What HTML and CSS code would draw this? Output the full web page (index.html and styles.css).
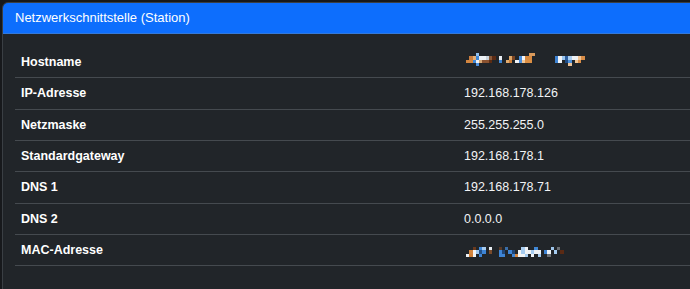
FILE: index.html
```html
<!DOCTYPE html>
<html lang="de">
<head>
<meta charset="utf-8">
<title>Netzwerkschnittstelle (Station)</title>
<link rel="stylesheet" href="styles.css">
</head>
<body>
<div class="card">
  <div class="card-header">Netzwerkschnittstelle (Station)</div>
  <div class="card-body">
    <table class="info">
      <tr><th>Hostname</th><td><svg class="mosaic host" viewBox="0 0 37 5" shape-rendering="crispEdges" aria-hidden="true">
        <rect x="3" y="0" width="1" height="1" fill="#8fc0ef"/>
        <rect x="19" y="0" width="2" height="1" fill="#d89a5c"/>
        <rect x="1" y="1" width="1" height="1" fill="#c97d3e"/>
        <rect x="2" y="1" width="1" height="1" fill="#e2b07a"/>
        <rect x="3" y="1" width="1" height="1" fill="#3d86d6"/>
        <rect x="4" y="1" width="2" height="1" fill="#eef2f6"/>
        <rect x="6" y="1" width="1" height="1" fill="#c9d3dc"/>
        <rect x="7" y="1" width="1" height="1" fill="#8a5a3a"/>
        <rect x="8" y="1" width="1" height="1" fill="#5a2a14"/>
        <rect x="10" y="1" width="1" height="1" fill="#e8eef4"/>
        <rect x="13" y="1" width="1" height="1" fill="#e0a868"/>
        <rect x="14" y="1" width="1" height="1" fill="#7a4422"/>
        <rect x="16" y="1" width="1" height="1" fill="#4b8fdc"/>
        <rect x="17" y="1" width="1" height="1" fill="#f4f6f8"/>
        <rect x="18" y="1" width="2" height="1" fill="#d7893f"/>
        <rect x="27" y="1" width="1" height="1" fill="#3e82d2"/>
        <rect x="28" y="1" width="1" height="1" fill="#f2f4f6"/>
        <rect x="29" y="1" width="1" height="1" fill="#9cc6ee"/>
        <rect x="30" y="1" width="1" height="1" fill="#2c5e9e"/>
        <rect x="31" y="1" width="1" height="1" fill="#a9cdf0"/>
        <rect x="32" y="1" width="2" height="1" fill="#eef1f4"/>
        <rect x="34" y="1" width="1" height="1" fill="#f0c494"/>
        <rect x="35" y="1" width="1" height="1" fill="#d88d48"/>
        <rect x="0" y="2" width="2" height="1" fill="#d38640"/>
        <rect x="2" y="2" width="1" height="1" fill="#3f88d8"/>
        <rect x="3" y="2" width="1" height="1" fill="#eef2f6"/>
        <rect x="4" y="2" width="1" height="1" fill="#d8ab78"/>
        <rect x="5" y="2" width="2" height="1" fill="#8a5230"/>
        <rect x="7" y="2" width="1" height="1" fill="#5c2c12"/>
        <rect x="10" y="2" width="1" height="1" fill="#3e86d6"/>
        <rect x="12" y="2" width="1" height="1" fill="#e2ad70"/>
        <rect x="13" y="2" width="1" height="1" fill="#cf7f38"/>
        <rect x="15" y="2" width="1" height="1" fill="#f0f3f6"/>
        <rect x="16" y="2" width="1" height="1" fill="#4a8ddb"/>
        <rect x="17" y="2" width="1" height="1" fill="#f1c89a"/>
        <rect x="18" y="2" width="2" height="1" fill="#dc8f44"/>
        <rect x="27" y="2" width="1" height="1" fill="#3f85d4"/>
        <rect x="28" y="2" width="1" height="1" fill="#f0f3f6"/>
        <rect x="30" y="2" width="1" height="1" fill="#1f4d86"/>
        <rect x="31" y="2" width="1" height="1" fill="#4d90da"/>
        <rect x="33" y="2" width="1" height="1" fill="#f2c898"/>
        <rect x="34" y="2" width="1" height="1" fill="#db8e46"/>
        <rect x="3" y="3" width="1" height="1" fill="#4a8ddb"/>
        <rect x="31" y="3" width="1" height="1" fill="#eec59a"/>
      </svg></td></tr>
      <tr><th>IP-Adresse</th><td>192.168.178.126</td></tr>
      <tr><th>Netzmaske</th><td>255.255.255.0</td></tr>
      <tr><th>Standardgateway</th><td>192.168.178.1</td></tr>
      <tr><th>DNS 1</th><td>192.168.178.71</td></tr>
      <tr><th>DNS 2</th><td>0.0.0.0</td></tr>
      <tr><th>MAC-Adresse</th><td><svg class="mosaic mac" viewBox="0 0 31 3" shape-rendering="crispEdges" aria-hidden="true">
        <rect x="2" y="0" width="1" height="1" fill="#6a3a1e"/>
        <rect x="4" y="0" width="1" height="1" fill="#3f86d6"/>
        <rect x="5" y="0" width="1" height="1" fill="#a6ccf0"/>
        <rect x="7" y="0" width="1" height="1" fill="#e8ecf0"/>
        <rect x="10" y="0" width="1" height="1" fill="#5a3a26"/>
        <rect x="12" y="0" width="1" height="1" fill="#3a6ea8"/>
        <rect x="17" y="0" width="1" height="1" fill="#a8cdf0"/>
        <rect x="18" y="0" width="1" height="1" fill="#f0f3f6"/>
        <rect x="21" y="0" width="1" height="1" fill="#4188d6"/>
        <rect x="26" y="0" width="1" height="1" fill="#9dc4ea"/>
        <rect x="28" y="0" width="1" height="1" fill="#6b6f74"/>
        <rect x="1" y="1" width="1" height="1" fill="#d38640"/>
        <rect x="2" y="1" width="1" height="1" fill="#f2f4f6"/>
        <rect x="3" y="1" width="1" height="1" fill="#9fc8ef"/>
        <rect x="4" y="1" width="1" height="1" fill="#234f86"/>
        <rect x="5" y="1" width="1" height="1" fill="#3e84d4"/>
        <rect x="7" y="1" width="1" height="1" fill="#7a4a2a"/>
        <rect x="10" y="1" width="1" height="1" fill="#3e84d4"/>
        <rect x="11" y="1" width="1" height="1" fill="#1f4577"/>
        <rect x="13" y="1" width="1" height="1" fill="#3e84d4"/>
        <rect x="14" y="1" width="1" height="1" fill="#1f4577"/>
        <rect x="16" y="1" width="1" height="1" fill="#f2f4f6"/>
        <rect x="17" y="1" width="1" height="1" fill="#a6ccf0"/>
        <rect x="18" y="1" width="2" height="1" fill="#f2f4f6"/>
        <rect x="20" y="1" width="1" height="1" fill="#a6ccf0"/>
        <rect x="21" y="1" width="2" height="1" fill="#eef2f6"/>
        <rect x="24" y="1" width="1" height="1" fill="#3e84d4"/>
        <rect x="25" y="1" width="1" height="1" fill="#eef2f6"/>
        <rect x="27" y="1" width="1" height="1" fill="#a6ccf0"/>
        <rect x="29" y="1" width="1" height="1" fill="#5a2a14"/>
        <rect x="0" y="2" width="1" height="1" fill="#eef2f6"/>
        <rect x="1" y="2" width="1" height="1" fill="#d08038"/>
        <rect x="2" y="2" width="1" height="1" fill="#f2f4f6"/>
        <rect x="4" y="2" width="1" height="1" fill="#3e84d4"/>
        <rect x="10" y="2" width="2" height="1" fill="#3e84d4"/>
        <rect x="14" y="2" width="1" height="1" fill="#3e84d4"/>
        <rect x="15" y="2" width="1" height="1" fill="#d38640"/>
        <rect x="16" y="2" width="2" height="1" fill="#f2f4f6"/>
        <rect x="18" y="2" width="1" height="1" fill="#a6ccf0"/>
        <rect x="20" y="2" width="1" height="1" fill="#eef2f6"/>
        <rect x="22" y="2" width="1" height="1" fill="#a6ccf0"/>
        <rect x="25" y="2" width="1" height="1" fill="#6b6f74"/>
      </svg></td></tr>
    </table>
  </div>
</div>
</body>
</html>
```

FILE: styles.css
```css
html, body {
  margin: 0;
  padding: 0;
  overflow: hidden;
}

body {
  background: #17191c;
  padding: 2px 0 0 2px;
  font-family: "Liberation Sans", Arial, sans-serif;
  color: #ffffff;
}

.card {
  width: 900px;
  height: 320px;
  background: #212529;
  border: 1px solid #3a3f44;
  border-radius: 6px;
  overflow: hidden;
}

.card-header {
  background: #0d6efd;
  color: #ffffff;
  font-size: 13px;
  line-height: 30px;
  height: 30px;
  padding: 0 12px;
  border-bottom: 1px solid #3479d8;
}

.card-body {
  padding: 13px 12px 12px 12px;
}

.info {
  width: 100%;
  border-collapse: collapse;
  font-size: 12.5px;
}

.info th,
.info td {
  padding: 5px 6px;
  line-height: 20.33px;
  border-bottom: 1px solid #454a4f;
  text-align: left;
  vertical-align: middle;
}

.info th {
  width: 431px;
  font-weight: bold;
  color: #ffffff;
}

.info td {
  color: #f1f3f5;
}

.mosaic {
  display: block;
}

.mosaic.host {
  width: 122px;
  height: 16.5px;
  margin: -3px 0 -2px 2px;
}

.mosaic.mac {
  width: 101px;
  height: 10px;
  margin: 4px 0 1px 2px;
}
```
